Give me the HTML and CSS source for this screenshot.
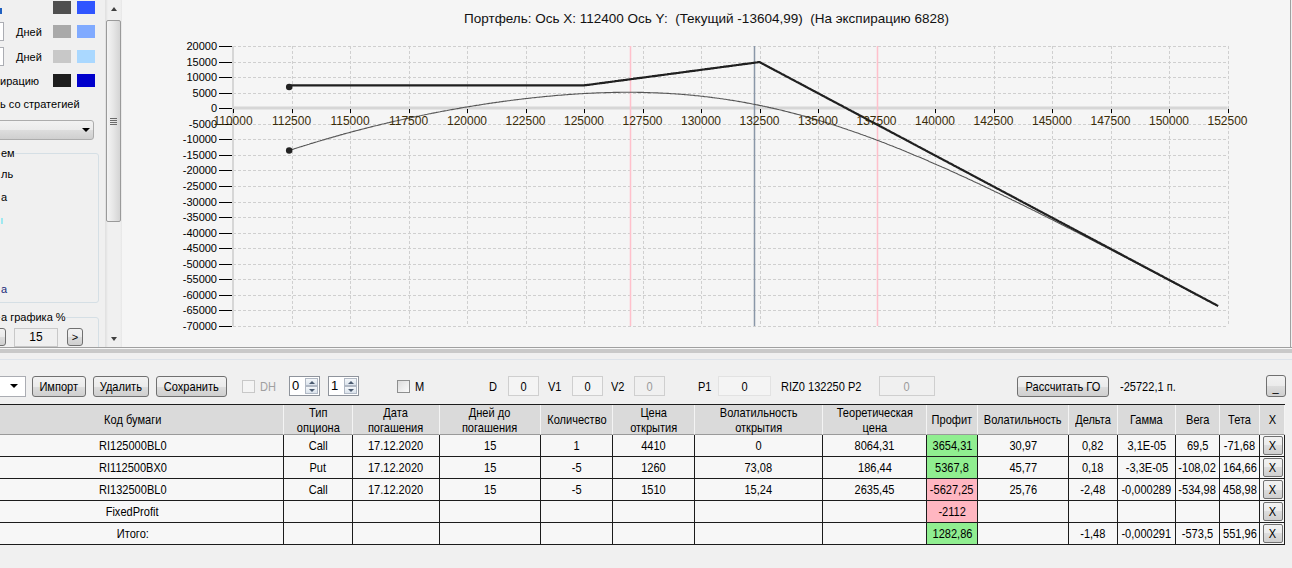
FILE: index.html
```html
<!DOCTYPE html>
<html lang="ru">
<head>
<meta charset="utf-8">
<title>Портфель</title>
<link rel="stylesheet" href="styles.css">
</head>
<body>
<div class="top">
  <div class="left">
    <div class="swrow r1">
      <div class="lcell"><span class="sliver"></span></div>
      <span class="sw c-dgray"></span><span></span><span class="sw c-blue"></span>
    </div>
    <div class="swrow r2">
      <div class="lcell"><span class="tbedge"></span><span class="lbl">Дней</span></div>
      <span class="sw c-mgray"></span><span></span><span class="sw c-lblue"></span>
    </div>
    <div class="swrow r3">
      <div class="lcell"><span class="tbedge"></span><span class="lbl">Дней</span></div>
      <span class="sw c-lgray"></span><span></span><span class="sw c-pblue"></span>
    </div>
    <div class="swrow r4">
      <div class="lcell"><span>ирацию</span></div>
      <span class="sw c-black"></span><span></span><span class="sw c-navy"></span>
    </div>
    <div class="ltext">ь со стратегией</div>
    <div class="lcombo"><span class="arrow-down"></span></div>
    <fieldset class="gb gb1">
      <legend>ем</legend>
      <div class="gbitem">ль</div>
      <div class="gbitem">а</div>
      <div class="gbitem"><span class="cyanbit"></span></div>
      <div class="gbitem"></div>
      <div class="gbitem"></div>
      <div class="gbitem navy">а</div>
    </fieldset>
    <fieldset class="gb gb2">
      <legend>а графика %</legend>
      <div class="gbrow">
        <span class="btn lb-part"></span>
        <span class="ltb">15</span>
        <span class="btn lb-next">&gt;</span>
      </div>
    </fieldset>
  </div>
  <div class="vscroll">
    <div class="sb-btn"><span class="arrow-up"></span></div>
    <div class="sb-thumb"><span class="grip"></span></div>
    <div class="sb-fill"></div>
    <div class="sb-btn"><span class="arrow-dn"></span></div>
  </div>
  <div class="chart">
    <svg id="chart" width="1168" height="347" viewBox="122 0 1168 347">
      <text class="ttl" x="706.5" y="23" text-anchor="middle">Портфель: Ось X: 112400 Ось Y:  (Текущий -13604,99)  (На экспирацию 6828)</text>
      <g id="grid"></g>
      <g id="marks"></g>
      <g id="curves"></g>
      <g id="labels"></g>
    </svg>
  </div>
</div>
<div class="splitter"></div>
<div class="bottom">
  <div class="toolbar">
    <div class="tcombo"><span class="arrow-down"></span></div>
    <span class="btn b-imp"><span class="n">Импорт</span></span>
    <span class="btn b-del"><span class="n">Удалить</span></span>
    <span class="btn b-save"><span class="n">Сохранить</span></span>
    <span class="chk chk-dis"></span><span class="tl l-dh">DH</span>
    <div class="num n1"><span class="numv">0</span><span class="spin"><i class="su"><b class="au"></b></i><i class="sd"><b class="ad"></b></i></span></div>
    <div class="num n2"><span class="numv">1</span><span class="spin"><i class="su"><b class="au"></b></i><i class="sd"><b class="ad"></b></i></span></div>
    <span class="chk chk-m"></span><span class="tl l-m">M</span>
    <span class="tl l-d">D</span><span class="tb tb-d"><span class="n">0</span></span>
    <span class="tl l-v1">V1</span><span class="tb tb-v1"><span class="n">0</span></span>
    <span class="tl l-v2">V2</span><span class="tb tb-v2 tb-dis"><span class="n">0</span></span>
    <span class="tl l-p1">P1</span><span class="tb tb-p1"><span class="n">0</span></span>
    <span class="tl l-riz">RIZ0 132250</span>
    <span class="tl l-p2">P2</span><span class="tb tb-p2 tb-dis"><span class="n">0</span></span>
    <span class="btn b-go"><span class="n">Рассчитать ГО</span></span>
    <span class="tl l-go">-25722,1 п.</span>
    <span class="btn b-min"><span class="n">_</span></span>
  </div>
  <div class="grid">
    <div class="hc"><span class="n">Код бумаги</span></div>
    <div class="hc"><span class="n">Тип<br>опциона</span></div>
    <div class="hc"><span class="n">Дата<br>погашения</span></div>
    <div class="hc"><span class="n">Дней до<br>погашения</span></div>
    <div class="hc"><span class="n">Количество</span></div>
    <div class="hc"><span class="n">Цена<br>открытия</span></div>
    <div class="hc"><span class="n">Волатильность<br>открытия</span></div>
    <div class="hc"><span class="n">Теоретическая<br>цена</span></div>
    <div class="hc"><span class="n">Профит</span></div>
    <div class="hc"><span class="n">Волатильность</span></div>
    <div class="hc"><span class="n">Дельта</span></div>
    <div class="hc"><span class="n">Гамма</span></div>
    <div class="hc"><span class="n">Вега</span></div>
    <div class="hc"><span class="n">Тета</span></div>
    <div class="hc"><span class="n">X</span></div>

    <div class="c"><span class="n">RI125000BL0</span></div><div class="c"><span class="n">Call</span></div><div class="c"><span class="n">17.12.2020</span></div><div class="c"><span class="n">15</span></div><div class="c"><span class="n">1</span></div><div class="c"><span class="n">4410</span></div><div class="c"><span class="n">0</span></div><div class="c"><span class="n">8064,31</span></div><div class="c pos"><span class="n">3654,31</span></div><div class="c"><span class="n">30,97</span></div><div class="c"><span class="n">0,82</span></div><div class="c"><span class="n">3,1E-05</span></div><div class="c"><span class="n">69,5</span></div><div class="c"><span class="n">-71,68</span></div><div class="c xc"><span class="xbtn"><span class="n">X</span></span></div>

    <div class="c"><span class="n">RI112500BX0</span></div><div class="c"><span class="n">Put</span></div><div class="c"><span class="n">17.12.2020</span></div><div class="c"><span class="n">15</span></div><div class="c"><span class="n">-5</span></div><div class="c"><span class="n">1260</span></div><div class="c"><span class="n">73,08</span></div><div class="c"><span class="n">186,44</span></div><div class="c pos"><span class="n">5367,8</span></div><div class="c"><span class="n">45,77</span></div><div class="c"><span class="n">0,18</span></div><div class="c"><span class="n">-3,3E-05</span></div><div class="c"><span class="n">-108,02</span></div><div class="c"><span class="n">164,66</span></div><div class="c xc"><span class="xbtn"><span class="n">X</span></span></div>

    <div class="c"><span class="n">RI132500BL0</span></div><div class="c"><span class="n">Call</span></div><div class="c"><span class="n">17.12.2020</span></div><div class="c"><span class="n">15</span></div><div class="c"><span class="n">-5</span></div><div class="c"><span class="n">1510</span></div><div class="c"><span class="n">15,24</span></div><div class="c"><span class="n">2635,45</span></div><div class="c neg"><span class="n">-5627,25</span></div><div class="c"><span class="n">25,76</span></div><div class="c"><span class="n">-2,48</span></div><div class="c"><span class="n">-0,000289</span></div><div class="c"><span class="n">-534,98</span></div><div class="c"><span class="n">458,98</span></div><div class="c xc"><span class="xbtn"><span class="n">X</span></span></div>

    <div class="c"><span class="n">FixedProfit</span></div><div class="c"></div><div class="c"></div><div class="c"></div><div class="c"></div><div class="c"></div><div class="c"></div><div class="c"></div><div class="c neg"><span class="n">-2112</span></div><div class="c"></div><div class="c"></div><div class="c"></div><div class="c"></div><div class="c"></div><div class="c xc"><span class="xbtn"><span class="n">X</span></span></div>

    <div class="c"><span class="n">Итого:</span></div><div class="c"></div><div class="c"></div><div class="c"></div><div class="c"></div><div class="c"></div><div class="c"></div><div class="c"></div><div class="c pos"><span class="n">1282,86</span></div><div class="c"></div><div class="c"><span class="n">-1,48</span></div><div class="c"><span class="n">-0,000291</span></div><div class="c"><span class="n">-573,5</span></div><div class="c"><span class="n">551,96</span></div><div class="c xc"><span class="xbtn"><span class="n">X</span></span></div>
  </div>
</div>
<script src="script.js"></script>
</body>
</html>
```

FILE: styles.css
```css
* { box-sizing: border-box; }
html, body { margin: 0; padding: 0; }
body {
  width: 1292px; height: 568px; overflow: hidden;
  background: #f0f0f0; color: #000;
  font-family: "Liberation Sans", Arial, sans-serif; font-size: 11px;
}
.top { display: flex; height: 348px; border-bottom: 1px solid #a0a0a0; }

/* left panel */
.left { width: 105px; height: 347px; overflow: hidden; background: #f0f0f0; }
.swrow { display: grid; grid-template-columns: 53px 18px 6px 18px; align-items: center; }
.r1 { height: 13px; margin-top: 1px; }
.r2 { height: 19px; margin-top: 8px; }
.r3 { height: 19px; margin-top: 6px; }
.r4 { height: 13px; margin-top: 8px; }
.sw { display: block; height: 13px; }
.c-dgray { background: #4f4f4f; }
.c-blue { background: #2f55ff; }
.c-mgray { background: #a9a9a9; }
.c-lblue { background: #80aaff; }
.c-lgray { background: #c8c8c8; }
.c-pblue { background: #aad8ff; }
.c-black { background: #1e1e1e; }
.c-navy { background: #0000cc; }
.lcell { display: flex; align-items: center; height: 100%; white-space: nowrap; }
.sliver { display: block; width: 2px; height: 6px; background: #2060c0; margin-top: 6px; }
.tbedge { display: block; width: 4px; height: 19px; background: #fff; border: 1px solid #abadb3; border-left: none; }
.lbl { margin-left: 12px; }
.ltext { margin-top: 11px; height: 13px; line-height: 13px; white-space: nowrap; }
.lcombo {
  margin-top: 9px; margin-left: -4px; width: 98px; height: 20px;
  border: 1px solid #acacac; border-radius: 3px;
  background: linear-gradient(#f2f2f2, #ebebeb 50%, #dddddd 50%, #cfcfcf);
  display: flex; justify-content: flex-end; align-items: center; padding-right: 3px;
}
.arrow-down { display: block; width: 0; height: 0; border-left: 4px solid transparent; border-right: 4px solid transparent; border-top: 4px solid #000; }
.gb { margin: 0 0 0 -5px; width: 104px; border: 1px solid #d5dfe5; border-radius: 3px; padding: 0 0 1px 5px; min-width: 0; }
.gb legend { padding: 0; line-height: 12px; white-space: nowrap; }
.gb1 { margin-top: 7px; }
.gbitem { height: 23px; line-height: 23px; white-space: nowrap; }
.gb1 .gbitem:nth-child(2) { margin-top: 4px; }
.cyanbit { display: inline-block; width: 2px; height: 6px; background: #9ee8f0; vertical-align: middle; }
.navy { color: #1a2a7a; }
.gb2 { margin-top: 8px; height: 60px; }
.gbrow { display: flex; align-items: center; margin-top: 5px; height: 18px; }
.btn {
  display: flex; align-items: center; justify-content: center;
  border: 1px solid #707070; border-radius: 3px;
  background: linear-gradient(#f2f2f2, #ebebeb 50%, #dddddd 50%, #cfcfcf);
  white-space: nowrap;
}
.lb-part { width: 20px; height: 18px; margin-left: -15px; }
.ltb { width: 44px; height: 19px; margin-left: 8px; background: #f0f0f0; border: 1px solid #c8c8c8; display: flex; align-items: center; justify-content: center; font-size: 12px; }
.lb-next { width: 16px; height: 18px; margin-left: 9px; font-size: 11px; }

/* scrollbar */
.vscroll { width: 17px; height: 347px; display: flex; flex-direction: column; background: linear-gradient(to right, #e3e3e3, #f0f0f0 2px, #f0f0f0 14px, #e6e6e6); border-left: 1px solid #e2e2e2; }
.sb-btn { height: 17px; display: flex; align-items: center; justify-content: center; }
.arrow-up { display: block; width: 0; height: 0; border-left: 3px solid transparent; border-right: 3px solid transparent; border-bottom: 4px solid #404040; }
.arrow-dn { display: block; width: 0; height: 0; border-left: 3px solid transparent; border-right: 3px solid transparent; border-top: 4px solid #404040; }
.sb-thumb {
  margin: 3px 0 0 0; width: 15px; height: 202px;
  border: 1px solid #9a9a9a; border-radius: 2px;
  background: linear-gradient(to right, #f4f4f4, #e6e6e6 50%, #d4d4d4);
  display: flex; align-items: center; justify-content: center;
}
.grip { display: block; width: 7px; height: 7px; background: repeating-linear-gradient(#6a6a6a 0 1px, transparent 1px 2px); }
.sb-fill { flex: 1; }

/* chart */
.chart { flex: 1; height: 347px; background: #f5f5f5; border-right: 1px solid #a0a0a0; margin-right: 1px; }
#chart { display: block; }
.ttl { font: 13.5px "Liberation Sans", Arial, sans-serif; fill: #111; white-space: pre; }
.gl { stroke: #cfcfcf; stroke-width: 1; stroke-dasharray: 3 2; fill: none; }
.axis { stroke: #d6d6d6; fill: none; }
.tick { stroke: #000; stroke-width: 1; }
.yl { font: 11px "Liberation Sans", Arial, sans-serif; fill: #000; }
.xl { font: 12px "Liberation Sans", Arial, sans-serif; fill: #3a2c08; }
.redl { stroke: #ffc0cb; stroke-width: 1.5; }
.bluel { stroke: #8a97a8; stroke-width: 1.5; }
.exp { stroke: #202020; stroke-width: 2.2; fill: none; stroke-linejoin: round; }
.theo { stroke: #555; stroke-width: 1.1; fill: none; }
.dot { fill: #222; }

/* splitter */
.splitter { height: 12px; border-top: 1px solid #f8f8f8; border-bottom: 1px solid #dde3ea; }
.splitter::before { content: ""; display: block; height: 4px; background: #c9c9c9; }

/* bottom: condensed text */
.bottom { height: 208px; padding-top: 15px; font-family: "Liberation Sans", Arial, sans-serif; font-size: 13px; }
.n { display: inline-block; transform: scaleX(0.85); white-space: nowrap; text-align: center; }
.toolbar { display: flex; align-items: center; height: 22px; white-space: nowrap; }
.tcombo {
  margin-left: -20px; width: 46px; height: 21px; background: #fff;
  border: 1px solid #abadb3; display: flex; justify-content: flex-end; align-items: center; padding-right: 7px;
}
.toolbar .btn { height: 21px; }
.b-imp { margin-left: 6px; width: 54px; }
.b-del { margin-left: 7px; width: 56px; }
.b-save { margin-left: 7px; width: 71px; }
.chk { display: block; width: 13px; height: 13px; border: 1px solid #8e8f8f; background: linear-gradient(135deg, #dcdcdc, #fbfbfb); }
.chk-dis { margin-left: 15px; border-color: #c8c8c8; background: #f4f4f4; }
.tl { display: block; transform: scaleX(0.85); transform-origin: left center; }
.l-dh { margin-left: 5px; width: 16px; color: #a0a0a0; }
.num { display: flex; height: 20px; width: 31px; border: 1px solid #8f949c; background: #fff; }
.n1 { margin-left: 13px; }
.n2 { margin-left: 8px; }
.numv { flex: 1; padding-left: 2px; line-height: 18px; }
.spin { display: flex; flex-direction: column; width: 13px; margin: 1px; }
.spin i { flex: 1; display: flex; align-items: center; justify-content: center; border: 1px solid #b0b8c4; background: linear-gradient(#f4f7fa, #dbe3ec); }
.au { display: block; width: 0; height: 0; border-left: 3px solid transparent; border-right: 3px solid transparent; border-bottom: 3px solid #4a5a70; }
.ad { display: block; width: 0; height: 0; border-left: 3px solid transparent; border-right: 3px solid transparent; border-top: 3px solid #4a5a70; }
.chk-m { margin-left: 38px; }
.l-m { margin-left: 5px; width: 12px; }
.l-d { margin-left: 62px; width: 9px; }
.tb { display: flex; align-items: center; justify-content: center; height: 20px; width: 31px; border: 1px solid #cfcfcf; background: #f4f4f4; }
.tb-dis { color: #9a9a9a; background: #f0f0f0; }
.tb-d { margin-left: 10px; }
.l-v1 { margin-left: 9px; width: 13px; }
.tb-v1 { margin-left: 11px; }
.l-v2 { margin-left: 8px; width: 14px; }
.tb-v2 { margin-left: 9px; }
.l-p1 { margin-left: 33px; width: 14px; }
.tb-p1 { margin-left: 6px; width: 53px; border-color: #e2e2e2; }
.l-riz { margin-left: 10px; width: 62px; }
.l-p2 { margin-left: 5px; width: 18px; }
.tb-p2 { margin-left: 13px; width: 56px; }
.b-go { margin-left: 82px; width: 92px; }
.l-go { margin-left: 11px; width: 60px; }
.b-min { margin-left: 86px; width: 20px; height: 22px !important; align-items: flex-end; padding-bottom: 2px; }

/* data grid */
.grid {
  display: grid; margin-top: 7px; margin-left: -18px; width: 1303px;
  grid-template-columns: 302px 69px 87px 101px 72px 82px 128px 104px 51px 91px 49px 58px 44px 40px 25px;
  border-top: 1px solid #1c1c1c;
}
.hc {
  height: 30px; background: #dadada; border-right: 1px solid #f4f4f4; border-bottom: 1px solid #9a9a9a;
  display: flex; align-items: center; justify-content: center; text-align: center; line-height: 15px;
}
.c {
  height: 22px; background: #f7f7f7; border-right: 1px solid #1c1c1c; border-bottom: 1px solid #1c1c1c;
  display: flex; align-items: center; justify-content: center; white-space: nowrap;
}
.pos { background: #90ee90; }
.neg { background: #ffb6c1; }
.xc { padding-left: 1px; }
.xbtn {
  display: flex; align-items: center; justify-content: center; width: 20px; height: 19px;
  border: 1px solid #707070; border-radius: 2px;
  background: linear-gradient(#f2f2f2, #ebebeb 50%, #dddddd 50%, #cfcfcf);
}
```

FILE: script.js
```js
(function () {
  var NS = 'http://www.w3.org/2000/svg';
  var grid = document.getElementById('grid');
  var marks = document.getElementById('marks');
  var curves = document.getElementById('curves');
  var labels = document.getElementById('labels');
  var X0 = 233, XPX = 58.5 / 2500, Y0 = 108.2, YPX = 280 / 90000;
  function xp(s) { return X0 + (s - 110000) * XPX; }
  function yp(v) { return Y0 - v * YPX; }
  function mk(tag, attrs, parent, text) {
    var e = document.createElementNS(NS, tag);
    for (var k in attrs) e.setAttribute(k, attrs[k]);
    if (text != null) e.textContent = text;
    parent.appendChild(e);
    return e;
  }
  var top = yp(20000), bot = yp(-70000), right = xp(152500);
  var s, v, x, y;
  for (s = 112500; s <= 152500; s += 2500) {
    x = Math.round(xp(s)) + 0.5;
    mk('line', { x1: x, y1: top, x2: x, y2: bot, 'class': 'gl' }, grid);
  }
  for (v = 20000; v >= -70000; v -= 5000) {
    if (v === 0) continue;
    y = Math.round(yp(v)) + 0.5;
    mk('line', { x1: X0, y1: y, x2: right, y2: y, 'class': 'gl' }, grid);
  }
  mk('line', { x1: X0, y1: top, x2: X0, y2: bot, 'class': 'axis', 'stroke-width': 2 }, grid);
  mk('line', { x1: X0, y1: Math.round(yp(0)), x2: right, y2: Math.round(yp(0)), 'class': 'axis', 'stroke-width': 3 }, grid);

  for (v = 20000; v >= -70000; v -= 5000) {
    y = Math.round(yp(v)) + 0.5;
    mk('line', { x1: 219, y1: y, x2: 232, y2: y, 'class': 'tick' }, marks);
    mk('text', { x: 217, y: Math.round(yp(v)) + 4, 'class': 'yl', 'text-anchor': 'end' }, labels, String(v));
  }
  for (s = 110000; s <= 152500; s += 2500) {
    x = Math.round(xp(s)) + 0.5;
    mk('line', { x1: x, y1: 109, x2: x, y2: 113, 'class': 'tick' }, marks);
    mk('text', { x: xp(s), y: 125, 'class': 'xl', 'text-anchor': 'middle' }, labels, String(s));
  }

  var spot = 132250, band = 5280;
  [spot - band, spot + band].forEach(function (p) {
    var xx = Math.round(xp(p)) + 0.5;
    mk('line', { x1: xx, y1: top, x2: xx, y2: bot, 'class': 'redl' }, marks);
  });
  var xb = Math.round(xp(spot)) + 0.5;
  mk('line', { x1: xb, y1: top, x2: xb, y2: bot, 'class': 'bluel' }, marks);

  var legs = [
    { t: 'c', k: 125000, q: 1, o: 4410, vol: 0.3097 },
    { t: 'p', k: 112500, q: -5, o: 1260, vol: 0.4577 },
    { t: 'c', k: 132500, q: -5, o: 1510, vol: 0.2576 }
  ];
  var fixed = -2112, T = 15 / 365;
  function ncdf(z) {
    var t = 1 / (1 + 0.2316419 * Math.abs(z));
    var d = 0.3989423 * Math.exp(-z * z / 2);
    var p = d * t * (0.3193815 + t * (-0.3565638 + t * (1.781478 + t * (-1.821256 + t * 1.330274))));
    return z > 0 ? 1 - p : p;
  }
  function bs(leg, S) {
    var sq = leg.vol * Math.sqrt(T);
    var d1 = (Math.log(S / leg.k) + 0.5 * sq * sq) / sq, d2 = d1 - sq;
    if (leg.t === 'c') return S * ncdf(d1) - leg.k * ncdf(d2);
    return leg.k * ncdf(-d2) - S * ncdf(-d1);
  }
  function expiry(S) {
    var sum = fixed;
    legs.forEach(function (l) {
      var intr = l.t === 'c' ? Math.max(0, S - l.k) : Math.max(0, l.k - S);
      sum += l.q * (intr - l.o);
    });
    return sum;
  }
  function theo(S) {
    var sum = fixed;
    legs.forEach(function (l) { sum += l.q * (bs(l, S) - l.o); });
    return sum;
  }
  var s0 = 112400, s1 = 152100;
  var pe = [], pt = [];
  for (s = s0; s <= s1; s += 50) {
    pe.push(xp(s).toFixed(1) + ',' + yp(expiry(s)).toFixed(1));
    pt.push(xp(s).toFixed(1) + ',' + yp(theo(s)).toFixed(1));
  }
  mk('polyline', { points: pt.join(' '), 'class': 'theo' }, curves);
  mk('polyline', { points: pe.join(' '), 'class': 'exp' }, curves);
  mk('circle', { cx: xp(s0), cy: yp(expiry(s0)), r: 3.2, 'class': 'dot' }, curves);
  mk('circle', { cx: xp(s0), cy: yp(theo(s0)), r: 3.2, 'class': 'dot' }, curves);
})();
```
